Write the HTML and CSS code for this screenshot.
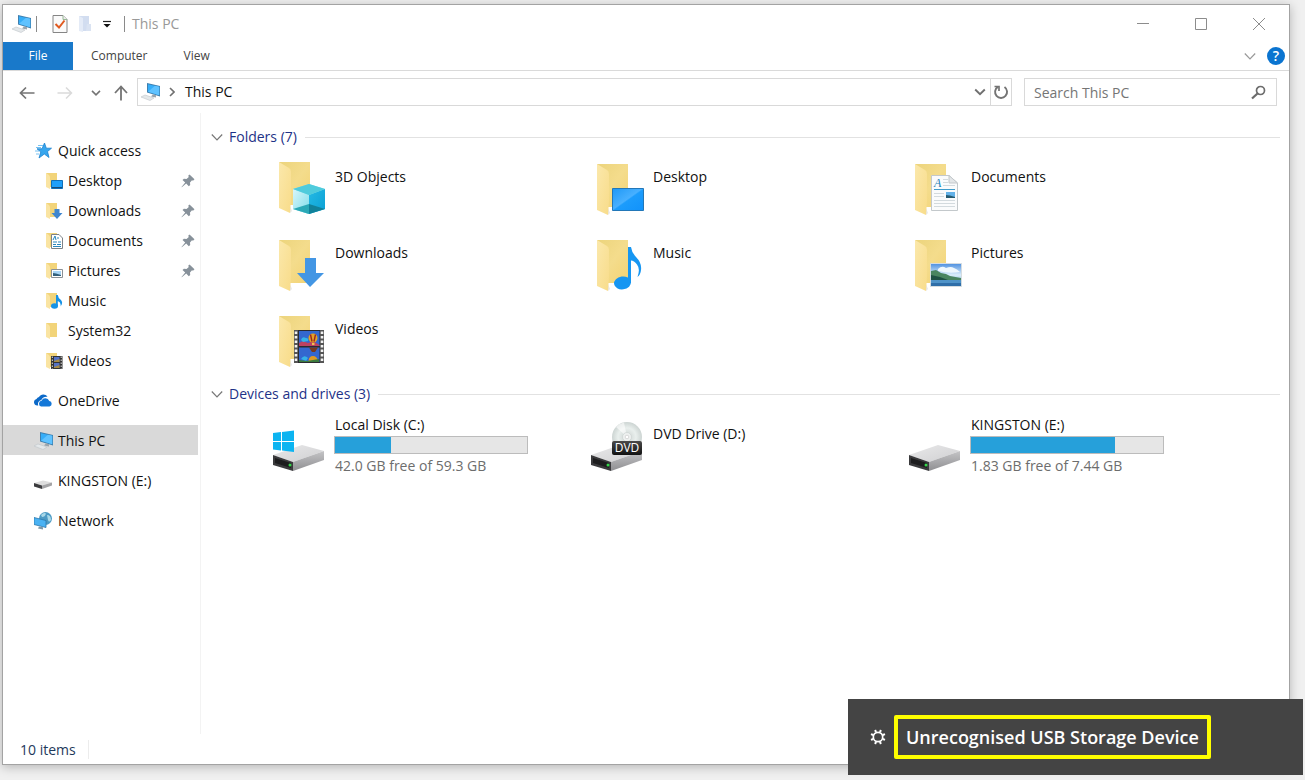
FILE: index.html
```html
<!DOCTYPE html>
<html lang="en">
<head>
<meta charset="utf-8">
<title>This PC</title>
<link rel="stylesheet" href="styles.css">
</head>
<body>
<svg class="defs" aria-hidden="true">
  <defs>
    <linearGradient id="back" x1="0" y1="0" x2="1" y2="1"><stop offset="0" stop-color="#ecd47c"/><stop offset=".5" stop-color="#f4dc8c"/><stop offset="1" stop-color="#f3d374"/></linearGradient>
    <linearGradient id="front" x1="0" y1="0" x2="1" y2="1"><stop offset="0" stop-color="#fbe8ab"/><stop offset="1" stop-color="#f8dc8a"/></linearGradient>
    <linearGradient id="screen" x1="0" y1="0" x2="1" y2="1"><stop offset="0" stop-color="#1e98f6"/><stop offset=".48" stop-color="#48b0ff"/><stop offset=".52" stop-color="#1c9cfc"/><stop offset="1" stop-color="#1192fb"/></linearGradient>
    <linearGradient id="metal" x1="0" y1="0" x2="1" y2="1"><stop offset="0" stop-color="#e9e9ea"/><stop offset="1" stop-color="#cfcfd1"/></linearGradient>
    <linearGradient id="side" x1="0" y1="0" x2="0" y2="1"><stop offset="0" stop-color="#c4c4c6"/><stop offset="1" stop-color="#8f8f92"/></linearGradient>
    <linearGradient id="sky" x1="0" y1="0" x2="0" y2="1"><stop offset="0" stop-color="#4c8fe0"/><stop offset=".5" stop-color="#dceefa"/><stop offset="1" stop-color="#4f9ccf"/></linearGradient>
    <linearGradient id="cubeL" x1="0" y1="0" x2="1" y2="1"><stop offset="0" stop-color="#d8f6fa"/><stop offset="1" stop-color="#7fdcea"/></linearGradient>
    <linearGradient id="cubeR" x1="0" y1="0" x2="1" y2="1"><stop offset="0" stop-color="#25b9e4"/><stop offset="1" stop-color="#0aa0d4"/></linearGradient>
    <radialGradient id="disc"><stop offset="0" stop-color="#fff"/><stop offset=".2" stop-color="#d5dcda"/><stop offset=".6" stop-color="#e9efed"/><stop offset="1" stop-color="#ccd4d2"/></radialGradient>
    <linearGradient id="badge" x1="0" y1="0" x2="0" y2="1"><stop offset="0" stop-color="#4a4a4a"/><stop offset="1" stop-color="#111"/></linearGradient>
  </defs>
  <symbol id="folder" viewBox="0 0 56 60">
    <path d="M7 7H38V50H18Z" fill="url(#back)"/>
    <path d="M18 51l2 5-2 2z" fill="#e8e8e8"/>
    <path d="M7 7L17 13Q19 14 19 17V44L18 58L7 53Z" fill="url(#front)"/>
  </symbol>
  <symbol id="drive" viewBox="0 0 56 60">
    <path d="M1 40L30 30L52 36L21 47Z" fill="url(#metal)"/>
    <path d="M21 47L52 36V45L21 56Z" fill="url(#side)"/>
    <path d="M1 40L21 47V56L1 50Z" fill="#3a3a3c"/>
    <path d="M3 43L19 48V53L3 48Z" fill="#1d1d1e"/>
    <circle cx="18" cy="50" r="1.500" fill="#35d64a"/>
  </symbol>
  <symbol id="small-folder" viewBox="0 0 18 18">
    <path d="M1 1H12V15H5Z" fill="#f2d47a"/>
    <path d="M1 1L4 3Q5 4 5 6V17L1 15Z" fill="#fae4a2"/>
  </symbol>
  <symbol id="pc" viewBox="0 0 20 18">
    <path d="M6 0L19 3V13.500L6 9.500Z" fill="#3f7fae"/>
    <path d="M7 1.300L18.200 3.800V12.200L7 8.800Z" fill="#35adf8"/>
    <path d="M7 8.800L14 2.800L18.200 3.800V12.200Z" fill="#5fc2ff"/>
    <path d="M12 11.300L15 12.200V14.500L10 13.500Z" fill="#9aa4ac"/>
    <path d="M0 14L4 12L13 15L9 17.500Z" fill="#e4e8ea" stroke="#c0c5c9" stroke-width=".6"/>
  </symbol>
  <symbol id="pin" viewBox="0 0 14 14">
    <path d="M8.500 .5L13.500 5.200L12 6.700L11 6.300L9 8.400L9.200 11L7.800 12.300L5.200 9.600L.8 13.200L.5 12.900L4.200 8.600L1.500 6L2.900 4.700L5.500 5L7.800 3L7.200 1.800Z" fill="#87919a"/>
  </symbol>
  <symbol id="chevron" viewBox="0 0 12 12"><path d="M.8 3.500L6 8.800L11.200 3.500" fill="none" stroke="currentColor" stroke-width="1.200"/></symbol>
  <symbol id="chevron-bold" viewBox="0 0 12 12"><path d="M1.200 3.500L6 8.200L10.800 3.500" fill="none" stroke="currentColor" stroke-width="1.900"/></symbol>
</svg>

<div class="window">
  <header class="titlebar">
    <svg class="pc-icon" width="20" height="18"><use href="#pc"/></svg>
    <span class="rule"></span>
    <button class="quick check" aria-label="Properties"><svg width="16" height="18" viewBox="0 0 16 18"><path d="M1 .5H11L15 4.500V17.500H1Z" fill="#fafafa" stroke="#858585"/><path d="M11 .5V4.500H15" fill="#eee" stroke="#98b894"/><path d="M3.500 9L7 12.500L12.500 5.500" fill="none" stroke="#e05a20" stroke-width="2"/></svg></button>
    <button class="quick" aria-label="New folder"><svg width="14" height="18" viewBox="0 0 14 18"><path d="M1 1H11V16H4Z" fill="#d2ddf0"/><path d="M1 1L5 3V17L1 16Z" fill="#e4ebf7"/><path d="M9 9h4v7H8z" fill="#dae3f2"/></svg></button>
    <button class="quick caret" aria-label="Customize Quick Access Toolbar"><svg width="10" height="10" viewBox="0 0 10 10"><path d="M1 2.500H9" stroke="#222" stroke-width="1.200"/><path d="M1.500 5H8.500L5 8.500Z" fill="#111"/></svg></button>
    <span class="rule"></span>
    <h1 class="title">This PC</h1>
    <div class="controls">
      <button aria-label="Minimize"><svg width="12" height="12"><path d="M0 5.500H12" stroke="#8c8c8c"/></svg></button>
      <button aria-label="Maximize"><svg width="12" height="12"><path d="M.5 .5H11.500V11.500H.5Z" fill="none" stroke="#8c8c8c"/></svg></button>
      <button aria-label="Close"><svg width="12" height="12"><path d="M0 0L12 12M12 0L0 12" stroke="#8c8c8c" fill="none"/></svg></button>
    </div>
  </header>

  <div class="ribbon">
    <button class="tab file">File</button>
    <button class="tab">Computer</button>
    <button class="tab">View</button>
    <div class="ribbon-end">
      <button class="expand" aria-label="Expand the Ribbon"><svg width="12" height="12"><use href="#chevron"/></svg></button>
      <button class="help" aria-label="Help">?</button>
    </div>
  </div>

  <div class="toolbar">
    <div class="history">
      <button aria-label="Back"><svg width="16" height="14" viewBox="0 0 16 14"><path d="M15.500 7H1.500M7 1.500L1.500 7L7 12.500" fill="none" stroke="#747474" stroke-width="1.700"/></svg></button>
      <button class="forward" aria-label="Forward"><svg width="16" height="14" viewBox="0 0 16 14"><path d="M.5 7H14.500M9 1.500L14.500 7L9 12.500" fill="none" stroke="#dadada" stroke-width="1.500"/></svg></button>
      <button class="recent" aria-label="Recent locations"><svg width="10" height="10"><use href="#chevron-bold"/></svg></button>
      <button class="up" aria-label="Up"><svg width="14" height="16" viewBox="0 0 14 16"><path d="M7 15.500V1.500M1 8L7 1.500L13 8" fill="none" stroke="#747474" stroke-width="1.800"/></svg></button>
    </div>
    <div class="address">
      <svg class="pc-icon" width="20" height="18"><use href="#pc"/></svg>
      <svg class="crumb" width="6" height="10" viewBox="0 0 6 10"><path d="M1 1L5 5L1 9" fill="none" stroke="#707070" stroke-width="1.600"/></svg>
      <a class="path" href="#">This PC</a>
      <button class="drop" aria-label="Previous locations"><svg width="12" height="12"><use href="#chevron-bold"/></svg></button>
      <button class="refresh" aria-label="Refresh"><svg width="16" height="16" viewBox="0 0 16 16"><path d="M11.500 3A6 6 0 1 1 4.800 2.900" fill="none" stroke="#747474" stroke-width="1.900"/><path d="M1.500 2.500H6V7" fill="none" stroke="#747474" stroke-width="1.700"/></svg></button>
    </div>
    <div class="search">
      <input id="search" type="search" placeholder="Search This PC" aria-label="Search This PC">
      <label for="search"><svg width="16" height="16" viewBox="0 0 16 16"><circle cx="9.500" cy="6.500" r="4" fill="none" stroke="#6c6c6c" stroke-width="1.700"/><path d="M6.500 9.500L1 14.500" stroke="#6c6c6c" stroke-width="2.300"/></svg></label>
    </div>
  </div>

  <div class="body">
    <nav class="nav" aria-label="Locations">
      <a class="item" href="#"><svg width="18" height="18" viewBox="0 0 18 18"><path d="M10.500 1L12.300 6.200H17.500L13.500 9.600L15 15.500L10.300 12L5 16L6.800 10L3 6.800H8Z" fill="#37a6ee" stroke="#1b81cf" stroke-width=".8"/><path d="M4 3.500H9M2 5.500H7M1 9H5M2 12H5" stroke="#55b2ee" stroke-width=".8"/></svg>Quick access</a>
      <a class="item sub" href="#"><svg width="18" height="18" viewBox="0 0 18 18"><use href="#small-folder"/><path d="M6.500 8.500H17.500V16.500H6.500Z" fill="#1ea0fb" stroke="#0f6fb8"/><path d="M7 15.500H17" stroke="#174c78"/></svg>Desktop<svg class="pin" width="14" height="14"><use href="#pin"/></svg></a>
      <a class="item sub" href="#"><svg width="18" height="18" viewBox="0 0 18 18"><use href="#small-folder"/><path d="M9.500 7H14.500V11H17.500L12 17L6.500 11H9.500Z" fill="#3f86cf"/></svg>Downloads<svg class="pin" width="14" height="14"><use href="#pin"/></svg></a>
      <a class="item sub" href="#"><svg width="18" height="18" viewBox="0 0 18 18"><use href="#small-folder"/><path d="M6.500 2.500H14L17.500 6V16.500H6.500Z" fill="#fff" stroke="#7d8388"/><path d="M8 8L10 4L11 8M12 6H14M8 10H12M13 10H16M8 12.500H11M12 12.500H16M8 14.500H16" fill="none" stroke="#2887bd"/></svg>Documents<svg class="pin" width="14" height="14"><use href="#pin"/></svg></a>
      <a class="item sub" href="#"><svg width="18" height="18" viewBox="0 0 18 18"><use href="#small-folder"/><path d="M6.500 7.500H17.500V15.500H6.500Z" fill="#fff" stroke="#8b9196"/><path d="M8 9H16V14H8Z" fill="#a8d5f5"/><path d="M8 11L11 11.500L16 13V14H8Z" fill="#34617c"/></svg>Pictures<svg class="pin" width="14" height="14"><use href="#pin"/></svg></a>
      <a class="item sub" href="#"><svg width="18" height="18" viewBox="0 0 18 18"><use href="#small-folder"/><ellipse cx="9.500" cy="14" rx="3.500" ry="2.800" fill="#1592e6"/><path d="M11 14V3H12.800Q13 6 16 8Q18.500 11 15.500 14.500Q16.500 10.500 12.800 9V14Z" fill="#1592e6"/></svg>Music</a>
      <a class="item sub" href="#"><svg width="18" height="18"><use href="#small-folder"/></svg>System32</a>
      <a class="item sub" href="#"><svg width="18" height="18" viewBox="0 0 18 18"><use href="#small-folder"/><path d="M6 4H17.500V17H6Z" fill="#333"/><path d="M9 5H14.500V10H9ZM9 11H14.500V16H9Z" fill="#5572c4"/><path d="M9 9L14.500 7V10H9ZM9 15L14.500 13V16H9Z" fill="#a68a44"/><path d="M7.300 4.500V17M16.200 4.500V17" stroke="#ddd" stroke-dasharray="1.500 1.500"/></svg>Videos</a>
      <a class="item top" href="#"><svg width="18" height="18" viewBox="0 0 18 18"><path d="M3.300 13.500A3.300 3.300 0 0 1 2.500 7A3.500 3.500 0 0 1 5 5A5 5 0 0 1 13.500 4.800A6 6 0 0 0 7.300 8A4 4 0 0 0 4.300 13.500Z" fill="#0c69c8"/><path d="M7 14.500A3 3 0 0 1 7.500 8.700A4.300 4.300 0 0 1 15.300 9A2.800 2.800 0 0 1 15.500 14.500Z" fill="#1478d8"/></svg>OneDrive</a>
      <a class="item top current" href="#" aria-current="page"><svg width="20" height="18"><use href="#pc"/></svg>This PC</a>
      <a class="item top" href="#"><svg width="18" height="18" viewBox="0 0 18 18"><path d="M0 11L9 8.500L18 10.500L8 13.500Z" fill="#dedede"/><path d="M8 13.500L18 10.500V13.500L8 17Z" fill="#a4a4a6"/><path d="M0 11L8 13.500V17L0 14.500Z" fill="#3c3c3e"/></svg>KINGSTON (E:)</a>
      <a class="item top" href="#"><svg width="18" height="18" viewBox="0 0 18 18"><circle cx="11.500" cy="6.500" r="6.500" fill="#4c9ac4"/><path d="M7 3Q10 0 12 1.500Q11 5 8 5ZM13 3Q17 3 17 8Q15 11 14 8Z" fill="#a8d8e8"/><path d="M0 5.500L12 8.500V15.500L0 12.500Z" fill="#4ab2f3" stroke="#2c77ab" stroke-width=".8"/><path d="M5 14.500L9 15.300V17.500L4 16.500Z" fill="#7e98a8"/></svg>Network</a>
    </nav>

    <main class="main">
      <section>
        <h2><button class="group"><svg width="12" height="12"><use href="#chevron"/></svg>Folders (7)</button></h2>
        <div class="grid">
          <a class="tile" href="#"><svg width="56" height="60" viewBox="0 0 56 60"><use href="#folder" y="-2" width="56" height="60"/><path d="M37 27L53 32V52L37 57L21 52V32Z" fill="#7ddbe9"/><path d="M21 32L37 38V57L21 52Z" fill="url(#cubeL)"/><path d="M37 38L53 32V52L37 57Z" fill="url(#cubeR)"/><path d="M21 32L37 27L53 32L37 38Z" fill="#4fcbdc"/><path d="M21 52L37 47V57Z" fill="#2ba9b7"/><path d="M37 47L53 52L37 57Z" fill="#11819a"/></svg><span class="name">3D Objects</span></a>
          <a class="tile" href="#"><svg width="56" height="60" viewBox="0 0 56 60"><use href="#folder" width="56" height="60"/><path d="M22.500 31.500H53.500V53.500H22.500Z" fill="url(#screen)" stroke="#2277b8"/></svg><span class="name">Desktop</span></a>
          <a class="tile" href="#"><svg width="56" height="60" viewBox="0 0 56 60"><use href="#folder" width="56" height="60"/><path d="M23.500 18.500H41L49.500 26V53.500H23.500Z" fill="#fafbfc" stroke="#c3c8cb"/><path d="M41 18.500V26H49.500Z" fill="#e3e6e8" stroke="#c3c8cb"/><text x="26" y="30" class="glyph-a">A</text><path d="M35 22.500H40M35 25.500H40M35 28.500H47M26 36.500H36M26 39.500H36M26 43.500H47M26 46.500H47M26 49.500H47" stroke="#d3dade"/><path d="M26 32.500H47" stroke="#3f9ccc"/><path d="M38 35H47V41H38Z" fill="#63b1e8"/><path d="M38 38L42 38.500L47 40V41H38Z" fill="#265a70"/></svg><span class="name">Documents</span></a>
          <a class="tile" href="#"><svg width="56" height="60" viewBox="0 0 56 60"><use href="#folder" width="56" height="60"/><path d="M33 25H44V40H52L38 54L25 40H33Z" fill="#4396e4"/></svg><span class="name">Downloads</span></a>
          <a class="tile" href="#"><svg width="56" height="60" viewBox="0 0 56 60"><use href="#folder" width="56" height="60"/><ellipse cx="32.500" cy="50" rx="8.500" ry="6.500" fill="#1696f2" transform="rotate(-8 32 50)"/><path d="M38 50V14H41Q41.500 19 46 24Q52 30 51 37Q50.500 42 47.500 44Q50.500 36 47 31.500Q44 27.500 41 27.500V50Z" fill="#1696f2"/></svg><span class="name">Music</span></a>
          <a class="tile" href="#"><svg width="56" height="60" viewBox="0 0 56 60"><use href="#folder" width="56" height="60"/><path d="M22.500 30.500H53.500V53.500H22.500Z" fill="url(#sky)" stroke="#d5dce0"/><path d="M30 36Q34 32 38 35Q43 33 46 35Q49 36 52 39Q41 41 30 38Z" fill="#eef7fd"/><path d="M23 38L28 37L33 40L38 41L42 43L53 45V47H23Z" fill="#4a8560"/><path d="M23 42L32 44L40 47H23Z" fill="#1f5144"/><path d="M23 47H53V53H23Z" fill="#4f93c8"/><path d="M23 50H53V53H23Z" fill="#2f6ea8"/></svg><span class="name">Pictures</span></a>
          <a class="tile" href="#"><svg width="56" height="60" viewBox="0 0 56 60"><use href="#folder" width="56" height="60"/><path d="M22 21H52V54H22Z" fill="#555"/><path d="M24 22.500V54M50 22.500V54" stroke="#f2f2f2" stroke-width="2.600" stroke-dasharray="2.500 2"/><path d="M26 21H48V54H26Z" fill="#2b2b30"/><path d="M27 22H47.500V37H27ZM27 38.500H47.500V53H27Z" fill="#3467cf"/><path d="M27 34L31 32L36 34L41 32L47.500 36V37H27Z" fill="#bc4262"/><path d="M29 31Q30 27 34 29Q37 29 36 32L31 33Z" fill="#35b2e8"/><path d="M29 50Q32 45 36 49L34 52Z" fill="#35b2e8"/><circle cx="41" cy="29" r="4.500" fill="#e2a325"/><path d="M38.500 25.500L40 32.500M43.500 25.500L42 32.500" stroke="#9c2720" stroke-width="1.400"/><path d="M40 34H42.500V36H40Z" fill="#eec24b"/><path d="M37 38.500H46L43 43H40Z" fill="#77391f"/><path d="M36.500 52Q37 47 41 47Q45 47 46 52Z" fill="#df9b25"/><path d="M27 51L35 52L47 50V53H27Z" fill="#3b7b3d"/></svg><span class="name">Videos</span></a>
        </div>
      </section>
      <section>
        <h2><button class="group"><svg width="12" height="12"><use href="#chevron"/></svg>Devices and drives (3)</button></h2>
        <div class="grid">
          <a class="tile drive" href="#"><svg width="56" height="60" viewBox="0 0 56 60"><use href="#drive" width="56" height="60"/><path d="M1 18L9 17V26H1ZM10 17L22 15.500V26H10ZM1 27H9V35.500L1 34.500ZM10 27H22V37L10 35.500Z" fill="#0cb4f1"/></svg><span class="info"><span class="label">Local Disk (C:)</span><span class="bar"><span class="used" style="width:29%"></span></span><span class="free">42.0 GB free of 59.3 GB</span></span></a>
          <a class="tile drive" href="#"><svg width="56" height="60" viewBox="0 0 56 60"><use href="#drive" width="56" height="60"/><circle cx="37" cy="22" r="15" fill="url(#disc)"/><path d="M37 22L26 12A15 15 0 0 1 34 7.500Z" fill="#fff" opacity=".6"/><circle cx="37" cy="22" r="4.500" fill="#eef1f0" stroke="#ccd3d1" stroke-width=".7"/><circle cx="37" cy="22" r="1.800" fill="#fff" stroke="#bbb" stroke-width=".5"/><rect x="22" y="26" width="30" height="14" rx="2" fill="url(#badge)"/><text x="37" y="37" text-anchor="middle" class="glyph-dvd">DVD</text></svg><span class="name">DVD Drive (D:)</span></a>
          <a class="tile drive" href="#"><svg width="56" height="60" viewBox="0 0 56 60"><use href="#drive" width="56" height="60"/></svg><span class="info"><span class="label">KINGSTON (E:)</span><span class="bar"><span class="used" style="width:75%"></span></span><span class="free">1.83 GB free of 7.44 GB</span></span></a>
        </div>
      </section>
    </main>
  </div>

  <footer class="status"><span>10 items</span></footer>
</div>

<aside class="toast" role="status">
  <svg width="16" height="16" viewBox="0 0 16 16"><circle cx="8" cy="8" r="4.700" fill="none" stroke="#fff" stroke-width="1.700"/><path d="M12.800 10L15 10.900M10 12.800L10.900 15M6 12.800L5.100 15M3.200 10L1 10.900M3.200 6L1 5.100M6 3.200L5.100 1M10 3.200L10.900 1M12.800 6L15 5.100" stroke="#fff" stroke-width="2"/></svg>
  <strong>Unrecognised USB Storage Device</strong>
</aside>
</body>
</html>
```
FILE: styles.css
```css
* { box-sizing: border-box; }

body {
  margin: 0;
  height: 100vh;
  padding: 4px 15px 15px 2px;
  background: #f0f0f0;
  font: 14px/20px "Open Sans", "Noto Sans", sans-serif;
  color: #111;
  overflow: hidden;
}

button {
  border: 0;
  padding: 0;
  margin: 0;
  background: none;
  font: inherit;
  color: inherit;
  display: flex;
  align-items: center;
  justify-content: center;
}

a { color: inherit; text-decoration: none; }
svg { flex: none; display: block; }
.defs { position: absolute; width: 0; height: 0; }

.window {
  height: 100%;
  display: flex;
  flex-direction: column;
  background: #fff;
  border: 1px solid #a3a3a3;
  box-shadow: 0 2px 10px rgba(0, 0, 0, .25);
}

/* Title bar */
.titlebar {
  display: flex;
  align-items: center;
  height: 37px;
  padding-left: 9px;
}
.rule { width: 1px; height: 16px; background: #8a8a8a; margin-left: 4px; }
.quick { margin-left: 10px; }
.check { margin-left: 15px; }
.caret { margin-right: 8px; }
.title { margin: 0 0 0 7px; font-size: 14px; font-weight: 400; color: #999; }
.controls { margin-left: auto; display: flex; align-self: stretch; padding-right: 1px; }
.controls button { width: 58px; }

/* Ribbon tabs */
.ribbon {
  display: flex;
  height: 29px;
  border-bottom: 1px solid #dadada;
  font-size: 12px;
  color: #444;
}
.tab { padding: 0 18px; }
.file { width: 70px; background: #1979ca; color: #fff; }
.ribbon-end { margin-left: auto; display: flex; align-items: center; gap: 11px; padding-right: 4px; }
.expand { color: #999; }
.help {
  width: 18px;
  height: 18px;
  border-radius: 50%;
  background: #0a74d0;
  color: #fff;
  font-size: 14px;
  font-weight: 600;
}

/* Address row */
.toolbar { display: flex; align-items: center; padding: 7px 12px 7px 0; }
.history { display: flex; align-items: center; width: 134px; padding: 2px 0 0 16px; }
.forward { margin-left: 22px; }
.recent { margin-left: 18px; color: #747474; }
.up { margin-left: 13px; }
.address {
  flex: 1;
  display: flex;
  align-items: center;
  height: 28px;
  padding-left: 3px;
  border: 1px solid #d9d9d9;
}
.crumb { margin: 0 10px 0 8px; }
.path { flex: 1; }
.drop { width: 20px; color: #707070; }
.refresh { width: 21px; align-self: stretch; border-left: 1px solid #d9d9d9; }
.search {
  display: flex;
  align-items: center;
  width: 253px;
  height: 28px;
  margin-left: 12px;
  padding: 0 9px;
  border: 1px solid #d9d9d9;
}
.search input {
  flex: 1;
  min-width: 0;
  padding: 2px 0 0;
  border: 0;
  outline: 0;
  background: none;
  font: inherit;
}
.search input::placeholder { color: #757575; opacity: 1; }

/* Body */
.body { flex: 1; display: flex; min-height: 0; }
.nav {
  width: 198px;
  padding-top: 22px;
  border-right: 1px solid #f3f3f3;
}
.item {
  display: flex;
  align-items: center;
  gap: 6px;
  height: 30px;
  margin-right: 2px;
  padding: 2px 0 0 31px;
}
.sub { padding-left: 42px; gap: 5px; }
.top { margin-top: 10px; }
.current { background: #d9d9d9; gap: 4px; }
.pin { margin-left: auto; margin-right: 3px; }

.main { flex: 1; min-width: 0; padding: 12px 9px 0 10px; }
h2 { margin: 0; display: flex; align-items: center; gap: 8px; font-size: 14px; font-weight: 400; }
h2::after { content: ""; flex: 1; height: 1px; background: #e2e2e2; }
.group { gap: 6px; height: 24px; color: #1e3287; }
.group svg { color: #777; }
.grid {
  display: grid;
  grid-template-columns: repeat(auto-fill, 318px);
  grid-auto-rows: 76px;
  padding: 4px 0 1px 61px;
}
.tile { display: flex; align-items: flex-start; gap: 7px; padding-top: 4px; }
.name { padding-top: 10px; }
.drive { padding-top: 5px; }
.drive .name { padding-top: 9px; }
.drive .info { display: flex; flex-direction: column; width: 194px; margin-left: -1px; }
.label, .free { padding-left: 1px; }
.bar { height: 18px; margin: 1px 0 2px; border: 1px solid #bcbcbc; background: #e6e6e6; }
.used { display: block; height: 100%; background: #26a0da; }
.free { color: #6d6d6d; }
.glyph-a { font: italic 12px "Liberation Serif", serif; fill: #1d7fb8; }
.glyph-dvd { font: 12px "Open Sans", sans-serif; fill: #fff; }

.status { height: 30px; padding: 6px 17px 4px; color: #1e395b; }
.status span { padding-right: 12px; border-right: 1px solid #ececec; }

/* Notification over the window corner */
.toast {
  position: fixed;
  right: 2px;
  bottom: 5px;
  width: 455px;
  height: 76px;
  padding-left: 22px;
  display: flex;
  align-items: center;
  gap: 8px;
  background: #444;
  color: #fff;
}
.toast strong {
  padding: 8px;
  border: 4px solid #ff0;
  border-radius: 2px;
  font-size: 18px;
  line-height: 20px;
  font-weight: 600;
}
```
